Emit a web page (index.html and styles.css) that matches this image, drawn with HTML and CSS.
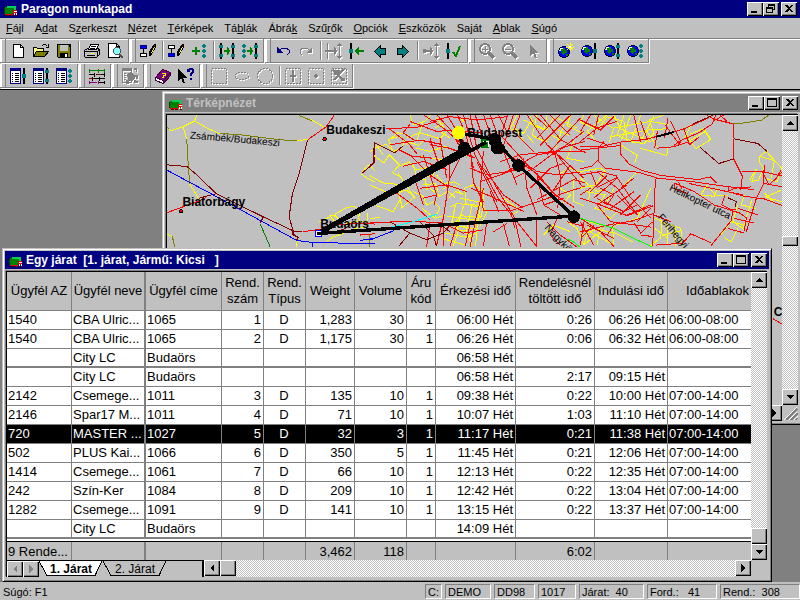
FILE: index.html
```
<!DOCTYPE html>
<html lang="hu">

<head>
    <meta charset="UTF-8">
    <meta name="viewport" content="width=device-width, initial-scale=1.0">
    <title>Paragon munkapad</title>
    <link rel="stylesheet" href="styles.css">
</head>

<body>
    <!-- shared icon shapes -->
    <svg class="defs" aria-hidden="true">
        <symbol id="truck" viewBox="0 0 14 12">
            <path d="M1 2h9v7H1z" fill="#008000"/><path d="M3 1h9v2H3zM10 3h2v3h-2z" fill="#00d050"/>
            <path d="M0 3h1v6H0z" fill="#004000"/>
            <path d="M9 5h4v4H9zM1 9h8v1H1z" fill="#e00000"/><path d="M10 6h3v1h-3zM10 8h1v2h-1zM12 8h1v2h-1z" fill="#fff"/>
            <path d="M2 10h3v1H2zM6 10h3v1H6zM11 10h2v1h-2z" fill="#600000"/>
        </symbol>
        <symbol id="new" viewBox="0 0 18 18">
            <path d="M4.500 2.500h7l3 3v10h-10z" fill="#fff" stroke="#000"/><path d="M11.500 2.500v3h3" fill="none" stroke="#000"/>
        </symbol>
        <symbol id="open" viewBox="0 0 18 18">
            <path d="M1.500 14.500v-9h3l1 1h6v3" fill="#ff8" stroke="#000"/><path d="M1.500 14.500l3-5h12l-4 5z" fill="#808000" stroke="#000"/>
            <path d="M9.500 4.500l2-2h2l2 2M16.500 2v3h-3" fill="none" stroke="#000"/>
        </symbol>
        <symbol id="save" viewBox="0 0 18 18">
            <path d="M2.500 2.500h13v13h-12l-1-1z" fill="#808000" stroke="#000"/><path d="M5 3h8v6H5z" fill="#c0c0c0"/>
            <path d="M5 11h8v5H5zM14 3h1v2h-1z"/><path d="M10 12h2v3h-2z" fill="#fff"/>
        </symbol>
        <symbol id="print" viewBox="0 0 18 18">
            <path d="M1.500 8.500l3-2h11l1 2v4l-3 3h-11l-1-1z" fill="#c0c0c0" stroke="#000"/>
            <path d="M5.500 7.500l2-5h8l-2 5z" fill="#fff" stroke="#000"/><path d="M8 4.500h5M7 6.500h5M2 9.500h12l2-1M4 13.500h8M14.500 9v5" stroke="#000" fill="none"/>
            <path d="M8 11h3v1H8z" fill="#ff0"/>
        </symbol>
        <symbol id="preview" viewBox="0 0 18 18">
            <path d="M2.500 1.500h8l3 3v11h-11z" fill="#fff" stroke="#000"/><path d="M10.500 1.500v3h3" fill="none" stroke="#000"/>
            <circle cx="11" cy="9" r="3.500" fill="#8ff" stroke="#505050"/><path d="M13 12l4 4" stroke="#505050" stroke-width="2"/>
        </symbol>
        <symbol id="pencil" viewBox="0 0 18 18">
            <path d="M10 14v-4l4-7 1-1h2v3l-4 7-1 1-1 1z"/><path d="M12 10h1V8h1V6h1V5h1v1h-1v2h-1v2h-1v1h-1z" fill="#ff0"/>
            <path d="M15 3h1v1h-1z" fill="#800000"/>
        </symbol>
        <symbol id="edit-depot" viewBox="0 0 18 18">
            <path d="M1.500 3.500h6v3h-6z" fill="#00f" stroke="#000080"/><path d="M4.500 7v5" stroke="#000" fill="none"/>
            <path d="M1.500 11.500h6v3h-6z" fill="#fff" stroke="#000"/><use href="#pencil"/>
        </symbol>
        <symbol id="edit-order" viewBox="0 0 18 18">
            <path d="M1.500 3.500h6v3h-6z" fill="#fff" stroke="#000"/><path d="M4.500 7v5" stroke="#000" fill="none"/>
            <path d="M1.500 11.500h6v3h-6z" fill="#00f" stroke="#000080"/><use href="#pencil"/>
        </symbol>
        <symbol id="dots" viewBox="0 0 4 14">
            <path d="M1 0h2v1h1v2H3v1H1V3H0V1h1zM1 5h2v1h1v2H3v1H1V8H0V6h1zM1 10h2v1h1v2H3v1H1v-1H0v-2h1z" fill="#008080"/>
        </symbol>
        <symbol id="stopline" viewBox="0 0 4 16">
            <path d="M1 0h2v16H1z"/><path d="M0 2h4v3H0zM0 11h4v3H0z" fill="#008080"/>
        </symbol>
        <symbol id="midline" viewBox="0 0 4 16">
            <path d="M1 0h2v16H1z"/><path d="M0 6h4v4H0z" fill="#008080"/>
        </symbol>
        <symbol id="add" viewBox="0 0 18 18">
            <path d="M5 5h2v3h3v2H7v3H5v-3H2V8h3z" fill="#008000"/><use href="#dots" x="12" y="2" width="4" height="14"/>
        </symbol>
        <symbol id="garrow" viewBox="0 0 6 8">
            <path d="M0 3h3V0h1v1h1v2h1v2H5v2H4v1H3V5H0z" fill="#008000"/>
        </symbol>
        <symbol id="route-one" viewBox="0 0 18 18">
            <use href="#stopline" x="1" y="1" width="4" height="16"/><use href="#garrow" x="6" y="5" width="6" height="8"/><use href="#stopline" x="13" y="1" width="4" height="16"/>
        </symbol>
        <symbol id="route-all" viewBox="0 0 18 18">
            <use href="#dots" x="1" y="2" width="4" height="14"/><use href="#garrow" x="6" y="5" width="6" height="8"/><use href="#stopline" x="13" y="1" width="4" height="16"/>
        </symbol>
        <symbol id="undo" viewBox="0 0 18 18">
            <path d="M5 9l3-3h4l3 2v3l-2 2" fill="none" stroke="#000080" stroke-width="1"/><path d="M3 5v6h6z" fill="#000080"/>
        </symbol>
        <symbol id="redo" viewBox="0 0 18 18">
            <path d="M13 9l-3-3H6L3 8v3l2 2" fill="none" stroke="#808080" stroke-width="1"/><path d="M15 5v6H9z" fill="#808080"/>
        </symbol>
        <symbol id="insert" viewBox="0 0 18 18">
            <path d="M2 1h1v16H2zM0 8h6v2H0zM6 8h3V5h1v1h1v2h1v2h-1v2h-1v1H9v-3H6zM14 1h1v16h-1zM12 3h5v1h-5zM13 2h3v1h-3zM12 14h5v1h-5zM13 15h3v1h-3z" fill="#808080"/>
        </symbol>
        <symbol id="remove" viewBox="0 0 18 18">
            <use href="#midline" x="1" y="1" width="4" height="16"/><path d="M7 8h1V7h1V6h1V5h1v3h5v2h-5v3h-1v-1H9v-1H8v-1H7z" fill="#008000"/>
        </symbol>
        <symbol id="prev" viewBox="0 0 18 18">
            <path d="M3.500 9.500l6-6v3h5v6h-5v3z" fill="#008080" stroke="#000"/>
        </symbol>
        <symbol id="next" viewBox="0 0 18 18">
            <path d="M14.500 9.500l-6-6v3h-5v6h5v3z" fill="#008080" stroke="#000"/>
        </symbol>
        <symbol id="assign" viewBox="0 0 18 18">
            <path d="M1 7h3v1h4V5h1v1h1v2h1v2h-1v2H9v1H8v-3H4v1H1zM14 1h1v16h-1zM12 3h5v1h-5zM13 2h3v1h-3zM12 14h5v1h-5zM13 15h3v1h-3z" fill="#808080"/>
        </symbol>
        <symbol id="accept" viewBox="0 0 18 18">
            <use href="#midline" x="1" y="1" width="4" height="16"/><path d="M8 10l3 4 4-10" fill="none" stroke="#008000" stroke-width="2"/>
        </symbol>
        <symbol id="zoom-in" viewBox="0 0 18 18">
            <circle cx="7" cy="7" r="5" fill="none" stroke="#808080" stroke-width="2"/><path d="M4 7h6M7 4v6" stroke="#808080"/><path d="M11 11l5 5" stroke="#808080" stroke-width="3"/>
        </symbol>
        <symbol id="zoom-out" viewBox="0 0 18 18">
            <circle cx="7" cy="7" r="5" fill="none" stroke="#808080" stroke-width="2"/><path d="M4 7h6" stroke="#808080"/><path d="M11 11l5 5" stroke="#808080" stroke-width="3"/>
        </symbol>
        <symbol id="pointer" viewBox="0 0 18 18">
            <path d="M6 3v11l3-3 2 5h2l-2-5h3z" fill="#808080"/>
        </symbol>
        <symbol id="globe" viewBox="0 0 12 12">
            <circle cx="6" cy="6" r="5.500" fill="#00f" stroke="#000040"/><path d="M3 2h4v2h2v3H7l-2 2-2-2 1-2-2-1zM8 8h2v2H8z" fill="#008000"/>
            <path d="M2 2h3v1H3v2H1V4h1z" fill="#fff"/>
        </symbol>
        <symbol id="globe-new" viewBox="0 0 18 18">
            <use href="#globe" x="1" y="4" width="12" height="12"/><path d="M13 1v8M9 5h8M10 2l6 6M16 2l-6 6" stroke="#ff0"/><path d="M12 4h2v2h-2z" fill="#fff"/>
        </symbol>
        <symbol id="globe-mid" viewBox="0 0 18 18">
            <use href="#globe" x="1" y="3" width="12" height="12"/><use href="#midline" x="13" y="1" width="4" height="16"/>
        </symbol>
        <symbol id="globe-stop" viewBox="0 0 18 18">
            <use href="#globe" x="1" y="3" width="12" height="12"/><use href="#stopline" x="13" y="1" width="4" height="16"/>
        </symbol>
        <symbol id="globe-dots" viewBox="0 0 18 18">
            <use href="#globe" x="1" y="3" width="12" height="12"/><use href="#dots" x="13" y="2" width="4" height="14"/>
        </symbol>
        <symbol id="sheet" viewBox="0 0 11 16">
            <path d="M.5.5h10v15H.5z" fill="#fff" stroke="#000080"/><path d="M1 1h9v2H1z" fill="#000080"/>
            <path d="M2 5.500h1M5 5.500h4M2 7.500h1M5 7.500h4M2 9.500h1M5 9.500h4M2 11.500h1M5 11.500h4M2 13.500h1M5 13.500h4" stroke="#000"/>
        </symbol>
        <symbol id="sheet-mid" viewBox="0 0 18 18">
            <use href="#sheet" x="1" y="1" width="11" height="16"/><use href="#midline" x="13" y="1" width="4" height="16"/>
        </symbol>
        <symbol id="sheet-stop" viewBox="0 0 18 18">
            <use href="#sheet" x="1" y="1" width="11" height="16"/><use href="#stopline" x="13" y="1" width="4" height="16"/>
        </symbol>
        <symbol id="sheet-dots" viewBox="0 0 18 18">
            <use href="#sheet" x="1" y="1" width="11" height="16"/><use href="#dots" x="13" y="2" width="4" height="14"/>
        </symbol>
        <symbol id="gantt" viewBox="0 0 18 18">
            <path d="M1 3.500h16M1.500 2v4M10.500 2v4M16.500 2v4" stroke="#008000"/>
            <path d="M1 7.500h5M8 7.500h9M6.500 6v4M16.500 6v4M1 11.500h16M4.500 10v4M11.500 10v4" stroke="#000"/>
            <path d="M1 11.500h5M9 7.500h4" stroke="#800000"/><path d="M1 15.500h8M1.500 14v3M10.500 14v3" stroke="#800080"/><path d="M11 15.500h6M16.500 14v3" stroke="#000"/>
        </symbol>
        <symbol id="report" viewBox="0 0 18 18">
            <path d="M1.500 1.500h9v14h-9z" fill="none" stroke="#808080"/><path d="M2 2h8v2H2zM3 6h2v1H3zM3 8h2v1H3zM3 10h2v1H3zM3 12h2v1H3z" fill="#808080"/>
            <path d="M6 7l4-2 4 3v3l-3 3H8v3H5v-4h2zM13 1h3v4h-1V3h-2zM13 8h4v4h-2v2h2v2h-4v-3h2v-3h-2z" fill="#808080"/>
        </symbol>
        <symbol id="book" viewBox="0 0 18 18">
            <path d="M1.500 10.500l7-8 8 3-7 8z" fill="#800080" stroke="#400040"/><path d="M1.500 10.500v3l8 3v-3z" fill="#fff" stroke="#400040"/>
            <path d="M9.500 13.500v3l7-8v-3z" fill="#800080" stroke="#400040"/><path d="M8 6h3v2H9v2H8" fill="none" stroke="#ff0"/>
        </symbol>
        <symbol id="help" viewBox="0 0 18 18">
            <path d="M1 2v12l3-3 2 5h2l-2-5h4z"/><path d="M10 2h2V1h4v1h1v4h-1v1h-1v2h-2V6h1V5h1V3h-2v2h-3zM13 11h2v2h-2z" fill="#000080"/>
        </symbol>
        <symbol id="sel-rect" viewBox="0 0 18 18">
            <path d="M1.500 1.500h15v15h-15z" class="dash"/>
        </symbol>
        <symbol id="sel-oval" viewBox="0 0 18 18">
            <ellipse cx="9" cy="9" rx="7" ry="3.500" class="dash"/>
        </symbol>
        <symbol id="sel-circle" viewBox="0 0 18 18">
            <circle cx="9" cy="9" r="7.500" class="dash"/>
        </symbol>
        <symbol id="sel-line" viewBox="0 0 18 18">
            <path d="M1.500 1.500h15v15h-15z" class="dash"/><path d="M8 3h2v12H8zM6 8h6v2H6z" fill="#808080"/>
        </symbol>
        <symbol id="sel-dot" viewBox="0 0 18 18">
            <path d="M1.500 1.500h15v15h-15z" class="dash"/><path d="M7 8h1V7h2v1h1v2h-1v1H8v-1H7z" fill="#808080"/>
        </symbol>
        <symbol id="sel-cut" viewBox="0 0 18 18">
            <path d="M1.500 1.500h15v15h-15z" class="dash"/><path d="M3 3l10 10M14 2L4 13" stroke="#808080" stroke-width="2"/><path d="M4 3h6v5H4zM11 11h4v3h-4z" fill="#808080"/>
        </symbol>
    </svg>

    <header class="titlebar app-title">
        <svg class="truck"><use href="#truck"/></svg>
        <h1 class="caption">Paragon munkapad</h1>
        <div class="winbuttons">
            <button class="winbtn" aria-label="Kis méret"><svg viewBox="0 0 12 10"><path d="M2 7h6v2H2z"/></svg></button>
            <button class="winbtn" aria-label="Előző méret"><svg viewBox="0 0 12 10"><path d="M3 0h7v6H8V5h1V2H4v1H3zM1 3h7v6H1zM2 5v3h5V5z" fill-rule="evenodd"/></svg></button>
            <button class="winbtn close" aria-label="Bezárás"><svg viewBox="0 0 12 10"><path d="M2 1h2l2 2 2-2h2L7 4.500 10 8H8L6 6 4 8H2l3-3.500z"/></svg></button>
        </div>
    </header>

    <nav class="menu">
        <a href="#"><u>F</u>ájl</a>
        <a href="#">A<u>d</u>at</a>
        <a href="#">S<u>z</u>erkeszt</a>
        <a href="#"><u>N</u>ézet</a>
        <a href="#"><u>T</u>érképek</a>
        <a href="#">Tá<u>b</u>lák</a>
        <a href="#">Ábrá<u>k</u></a>
        <a href="#">Szű<u>r</u>ők</a>
        <a href="#"><u>O</u>pciók</a>
        <a href="#"><u>E</u>szközök</a>
        <a href="#">Sa<u>j</u>át</a>
        <a href="#"><u>A</u>blak</a>
        <a href="#"><u>S</u>úgó</a>
    </nav>

    <div class="toolrow first">
        <div class="tools">
            <button class="tool" aria-label="Új"><svg><use href="#new"/></svg></button>
            <button class="tool" aria-label="Megnyitás"><svg><use href="#open"/></svg></button>
            <button class="tool" aria-label="Mentés"><svg><use href="#save"/></svg></button>
            <span class="sep"></span>
            <button class="tool" aria-label="Nyomtatás"><svg><use href="#print"/></svg></button>
            <button class="tool" aria-label="Nyomtatási kép"><svg><use href="#preview"/></svg></button>
        </div>
        <div class="tools">
            <button class="tool" aria-label="Raktár szerkesztése"><svg><use href="#edit-depot"/></svg></button>
            <span class="sep"></span>
            <button class="tool" aria-label="Rendelés szerkesztése"><svg><use href="#edit-order"/></svg></button>
            <button class="tool" aria-label="Hozzáadás"><svg><use href="#add"/></svg></button>
            <span class="sep"></span>
            <button class="tool" aria-label="Járat tervezése"><svg><use href="#route-one"/></svg></button>
            <button class="tool" aria-label="Minden járat tervezése"><svg><use href="#route-all"/></svg></button>
        </div>
        <div class="tools">
            <button class="tool" aria-label="Visszavonás"><svg><use href="#undo"/></svg></button>
            <button class="tool" aria-label="Mégis" disabled><svg><use href="#redo"/></svg></button>
            <span class="sep"></span>
            <button class="tool" aria-label="Beszúrás" disabled><svg><use href="#insert"/></svg></button>
            <button class="tool" aria-label="Kivétel"><svg><use href="#remove"/></svg></button>
            <button class="tool" aria-label="Előző"><svg><use href="#prev"/></svg></button>
            <button class="tool" aria-label="Következő"><svg><use href="#next"/></svg></button>
            <span class="sep"></span>
            <button class="tool" aria-label="Hozzárendelés" disabled><svg><use href="#assign"/></svg></button>
            <button class="tool" aria-label="Elfogadás"><svg><use href="#accept"/></svg></button>
        </div>
        <div class="tools">
            <button class="tool" aria-label="Nagyítás" disabled><svg><use href="#zoom-in"/></svg></button>
            <button class="tool" aria-label="Kicsinyítés" disabled><svg><use href="#zoom-out"/></svg></button>
            <button class="tool" aria-label="Kijelölés" disabled><svg><use href="#pointer"/></svg></button>
        </div>
        <div class="tools">
            <button class="tool" aria-label="Új térkép"><svg><use href="#globe-new"/></svg></button>
            <button class="tool" aria-label="Járat térképen"><svg><use href="#globe-mid"/></svg></button>
            <button class="tool" aria-label="Megállók térképen"><svg><use href="#globe-stop"/></svg></button>
            <button class="tool" aria-label="Rendelések térképen"><svg><use href="#globe-dots"/></svg></button>
        </div>
    </div>
    <div class="toolrow">
        <div class="tools">
            <button class="tool" aria-label="Járat tábla"><svg><use href="#sheet-mid"/></svg></button>
            <button class="tool" aria-label="Megálló tábla"><svg><use href="#sheet-stop"/></svg></button>
            <button class="tool" aria-label="Rendelés tábla"><svg><use href="#sheet-dots"/></svg></button>
        </div>
        <div class="tools">
            <button class="tool" aria-label="Időábra"><svg><use href="#gantt"/></svg></button>
        </div>
        <div class="tools">
            <button class="tool" aria-label="Szűrő" disabled><svg><use href="#report"/></svg></button>
        </div>
        <div class="tools">
            <button class="tool" aria-label="Kézikönyv"><svg><use href="#book"/></svg></button>
            <button class="tool" aria-label="Súgó"><svg><use href="#help"/></svg></button>
        </div>
        <div class="tools">
            <button class="tool" aria-label="Téglalap" disabled><svg><use href="#sel-rect"/></svg></button>
            <button class="tool" aria-label="Ellipszis" disabled><svg><use href="#sel-oval"/></svg></button>
            <button class="tool" aria-label="Kör" disabled><svg><use href="#sel-circle"/></svg></button>
            <span class="sep"></span>
            <button class="tool" aria-label="Járatok kijelölése" disabled><svg><use href="#sel-line"/></svg></button>
            <button class="tool" aria-label="Pontok kijelölése" disabled><svg><use href="#sel-dot"/></svg></button>
            <button class="tool" aria-label="Kijelölés törlése" disabled><svg><use href="#sel-cut"/></svg></button>
        </div>
    </div>

    <main class="desktop">
        <!-- map window -->
        <section class="window map-window">
            <div class="titlebar inactive">
                <svg class="truck"><use href="#truck"/></svg>
                <h2 class="caption">Térképnézet</h2>
                <div class="winbuttons">
                    <button class="winbtn" aria-label="Kis méret"><svg viewBox="0 0 12 10"><path d="M2 7h6v2H2z"/></svg></button>
                    <button class="winbtn" aria-label="Teljes méret"><svg viewBox="0 0 12 10"><path d="M1 0h10v9H1zM2 2v6h8V2z" fill-rule="evenodd"/></svg></button>
                    <button class="winbtn close" aria-label="Bezárás"><svg viewBox="0 0 12 10"><path d="M2 1h2l2 2 2-2h2L7 4.500 10 8H8L6 6 4 8H2l3-3.500z"/></svg></button>
                </div>
            </div>
            <div class="frame map-frame">
                <!-- three map units to one pixel -->
                <svg class="map" viewBox="0 0 1842 867" preserveAspectRatio="xMinYMin slice">
                    <!-- west sheet -->
                    <g transform="translate(-24 -81)">
                        <path class="yellow" d="M24 118l12 10 36-12 34-17 8-20M106 99l40 22 36 16M72 116l6 20 5 18M92 288l16 25 12 22M412 158l34-4M455 95l42 24M606 255l14-20 10-5 15 18M606 258l20 14 19 8M24 438l16 6M510 382l16-2 14 14-10 10zM520 380l22 15M526 378l30-18 24-6 26 10-10 22 6 18M622 374v40M500 460l20-14 80-30 45 6M480 400l30-14M560 404l50-6M413 457l-2 19"/>
                        <path class="olive" d="M83 154l5 85 4 48M182 136l60 4 120 15 50 3M418 82l38 16M40 444l7 32M24 118l6 4M628 440v36"/>
                        <path class="maroon" d="M24 230l60 5 30 26 57 55 60 30 82 40 90 42 25 2M171 316l-52 14M444 156l-25 100-20 60-10 70 12 40 2 12 14 10-8 10M312 386l-10 18M400 424l-2 14 20 10M644 162v62l-38 32M500 438l60-18"/>
                        <path class="red" d="M524 82l-24 34-54 38M24 373l96-35 20-10M430 430l50-7 40-12 60-6 65 2M570 406v8M600 440l45-4"/>
                        <path class="blue" d="M24 246l146 78 242 132 45 6 188 4M460 462l-2 14M600 456l45-6"/>
                        <path class="green" d="M302 406l30 68"/>
                    </g>
                    <!-- city sheet -->
                    <g transform="translate(606 -81)">
                        <path class="yellow" d="M0 192l20-14 30-10 20 22 24-8 12-24 40 14 20-20M10 200l32 24 16-24 30 30-20 24 30 14M70 190l-14-36 36-10 20 26M0 262l40 22 60 6 30-14M0 290l60 26 50-10 24 20-40 34M20 352l50 18 20-34M88 235l30-14 20 24 30-6-10 26-28 10M120 80l10 30 34-10 18-18M110 150l40-16 60 18 20-22-30-40M140 180l40 10 50-16M150 205l60 8 30 18M0 392l30-6M130 310l30 14 10 26 22-10 18 20-16 28M180 300l30 24 24-16 22 20M156 360l40 30 30-10M200 260l20 26 30-4M210 130l30 20M260 80l22 20M284 300l26-10 30 16v36l-22 14-30-10z"/>
                        <path class="yellow" d="M240 356l20-10 80 6-8 36-60-6-22 28 60 10 20-40M256 350l-10 50 20 26-16 46M280 354l-20 70 30 4 16 46M306 352l-18 80 20 20M330 350l-14 124M226 434l60 12 34-12M216 450l70 20M240 410l80 12M232 384l90 12M270 330l60 12 20 30-20 40M440 82l-20 40 40 14 18-30 44 20M460 96l70 30 20-40M500 82l-14 60 40 20 30-40 40 20M560 90l60 30M540 140l80 40M580 110l-24 70M600 82l-10 30 50 26M610 160l-20 50 50 10M560 260l40-20 30 14M610 270v70l30 12M570 300l30 20-30 34M520 440l30-30 50 20M400 330l40 30M420 380l24-10M590 400l30 20 20 50"/>
                        <path class="yellow" d="M130 230l12 40 24 4 6 30M150 270l40-10 14-30M160 290l36-4 10 26M110 290l26 44M60 154l24-20 30 6M40 200l-20-30M84 254l20 30-16 36 10 40M220 300l34-6 18 20M250 280l20 10M236 330l20-20 24 8M196 120l26-16M160 100l-20 60M480 84l10 24M530 84l-10 40M430 110l30 50M470 140l20 24"/>
                        <path class="red" d="M160 80l60 40 70 60M200 80l46 50 20 40M232 82l30 50 40 60 8 90 30 60M262 80l26 60 22 100M280 80l34 120 70 130 40 50 10 40M300 80l20 100 60 120 60 100 60 75M315 80l20 60 40 36M340 80l20 56 50 60 90 60 60 70M360 80l40 110 40 100M385 80l30 60M412 82l-20 60 60 66 100 110 60 40M430 80l-36 110M450 80l-20 50 60 60M470 80l60 90 110 100M490 80l40 36M510 80l60 74 75 40M540 82l60 60M570 80l-70 70M600 82l-90 90M630 90l-100 110M640 130l-90 70M180 100l60-14 80 10 90-10M120 100l80 30 60-4 80 10M50 122l90-4 60-18M58 122l60 46 24 30M60 170l90-14 60 12M86 184l40 20 60 6M100 234l60-14 70 24M120 200l60 60 54 36M160 200l20 60 20 60-8 30M180 170l60 10 70 26"/>
                        <path class="red" d="M240 200v60l-20 130-20 80M270 210l-30 60M300 240l50 20 90-14M330 280l60-20 80-30M302 300l50 20 110 50M340 300l-20 80-20 94M340 366l80 2 130-44 94-30M340 190l-10 120 10 56M360 310l26 60M370 430l40-24M400 408l18 66M500 390v85M432 385l20 90M390 220l60-20 100-10 95 0M410 250l90-50 60-10M430 270l60-30 80-60 74-20M440 210l60 40 60 10 80-10M480 300l60-60 40-14M500 334l110-60 35 10M520 350l60-20M552 190l20 80-10 90M560 200l80 100M600 230l-60 90M460 210l10 90 30 80M500 260l20 90 50 30M0 404l120-6 100 6M80 314l60 44 40 36M150 300l80-10 60 20M130 260l30 90M160 330l40-10M220 410v64M260 410l-20 64M300 406l-14 68M350 400l-10 74M180 405l-10 70M220 404l60 30 60-10M10 420l60 4"/>
                        <path class="red" d="M530 400l40 40 50 36M560 390l-20 50 30 30M590 400l50 14M120 110l-20 24 36 24M180 150l30 90M210 150l20 120M235 180l80 30M340 240l60 80 60 40M320 220l60 120"/>
                        <path class="maroon" d="M0 230l10-4 4-62 60 30 26-20M60 400l60 34 50 20 50-20 20-24M120 434l-32 38M150 400l40 40 10 34M200 400l40 30"/>
                        <path class="cyan" d="M0 426l60-8 70-18 70-22"/>
                        <path class="blue" d="M0 455l72-28"/>
                        <path class="lime" d="M590 452l16 6 22 18M620 388l25 8"/>
                    </g>
                    <!-- east sheet -->
                    <g transform="translate(1236 -81)">
                        <path class="yellow" d="M10 82l-10 20 50 24 30-40 50 14 10 60 50 6 30-30-14-40 40-14M40 82l60 40-14 40M80 80l-60 50 28 30M100 82l20 40 90 40M130 82l-20 60 50 20M150 82l-26 70M180 82l-30 80M220 84l-40 76M100 120l110-20 54 10M90 146l110-20 60-4M120 170l50 32-8 22M178 180l80 22 4-22M196 126l34 50M310 126l34 56 44-26-20-34-40 16M324 160l50-30M330 112l-20 40M370 124l20 30M0 250l60-10 14 10-30 40-44 10M0 270l50 40 30-10M14 310l60 10-30 40 30 10M70 360l40 10-20 20-16-10M30 300l-6 40M120 300l44-44 14-4M100 300l-20 40M210 300l-40 90-60 20M560 188l-22 14-4 18 14 20-16 36-20 4 14-38-20 34M556 190l46 50-14 40-30-8M535 204l45 14-10 50M0 390l60 20-10 60M10 420l90 50M0 440l50-18 50 12v40M10 470l60-50M100 400l-4 30 60 30M30 400l-20 70M218 388l26 10-4 50-30 24M240 400l60 20 4 50M245 440l60-14M260 404v66M285 412v60M222 420l40 30M378 292l-18 28 40 4 10-24M378 292l30 30 32 0M600 306l-46 20 52 16M490 320l-10 30 44 10M470 350l-14 50 34 24M512 336l-26 84M420 440l30-40 40 10M430 448l20 12 20-40M550 314l30 30"/>
                        <path class="red" d="M0 96l60 30 40-40M0 130l30-48M40 140l14-58M0 160l50-40 60-20M20 150l60 20M0 174l60 2 60-14 76-8 50-14 60-16 76-34M0 186l120-14M70 160l-16 20v40l20 20 98 12 60 18 100 10 98 14 50 6 38 4M120 164v34l26 30 36 18 60 16 110 12 36-8 18 18M54 214l-20 20-34 8M404 82l-10 26-40 26-60 26-14 12M378 82l24 12 56 14v42M416 80l22 20M430 80l-30 18M458 152v60l26 52M270 100l30 60-10 14M262 90l-10 60M254 112l44 60M230 130l-8 50M180 100l20 54M160 82l20 80M230 180l50-4 40-14M310 124l16 46 30-24M484 264l-4 40M484 250h60l60 14M550 230l-4 60-20 40-30 100M544 250l20 40 46-46M600 245l-20 34M550 286l55 10M440 310l50 14 60 8 54 20M440 310l20-10 50-4M432 320l-10 30 30 14 14 0M442 296v14M456 368l-6 30-60 74M230 270l-6 4-8 200M280 284l60 26 60 40 76 24 20 14-6 40M280 284l2 18 40 14M294 282l10 20M326 286l160 34M330 436l62 28M330 436l-24 28-80 6"/>
                        <path class="red" d="M0 260l60-10 50 14M30 248l20 50 60-30 40 60 60 60M50 250l60 50 60 80M60 300l40 20-20 30-30-20M30 310l50-48M40 330l70-60M50 350l90-60M90 360l70-50M120 380l60-60M70 340l60 30 40-20M120 300l40-30M140 380l70-30M110 320l60 60M50 350l40 50 120 16M0 330l50 16 90 36 78-30M150 400l66-24M0 390l60 40 40 44M0 400l40 70M10 400l-10 70M20 410l80 40M0 430l100-24M160 404l20 30 36-34M0 450l40-40M180 440l34 4M80 440l20-30M100 408l60-12M220 380l50 20M210 360l-40 40M470 360l60 20M460 390l60 14M440 420l50 14M0 320l30-20"/>
                        <path class="maroon" d="M336 108l60-26M358 178l56 48 44-14M458 152l72 14 28 24M440 328l26 12-4 16"/>
                        <path class="olive" d="M456 108l40-4 46-8 20-14"/>
                        <path class="black" d="M226 146l54-14"/>
                        <path class="lime" d="M0 390l100 30 60 30 54 25"/>
                        <!-- strip beside the front window -->
                        <path class="red" d="M576 690l30 18"/>
                    </g>
                    <g class="places">
                        <text x="476" y="57">Budakeszi</text>
                        <text x="46" y="273">Biatorbágy</text>
                        <text x="458" y="339">Budaörs</text>
                        <text x="898" y="67">Budapest</text>
                        <text x="1814" y="600">Cs</text>
                    </g>
                    <g class="streets">
                        <text transform="translate(68 70) rotate(5)">Zsámbék/Budakeszi</text>
                        <text transform="translate(1500 224) rotate(26)">Helikopter utca</text>
                        <text transform="translate(1466 306) rotate(50)">Ferihegyi út</text>
                        <text transform="translate(1128 338) rotate(47)">Nagykőrösi</text>
                    </g>
                    <circle class="town" cx="471" cy="72" r="5"/>
                    <circle class="town" cx="42" cy="288" r="5"/>
                    <!-- the planned route -->
                    <path d="M940 66h24v32h-24z" fill="#008000"/><path class="flag" d="M946 80h16v16"/>
                    <g class="route">
                        <path d="M453 354L890 102" stroke-width="15"/>
                        <path d="M453 354L950 84" stroke-width="11"/>
                        <path d="M872 54l14 44M872 54l104 18 74 78 166 152L453 354" stroke-width="10"/>
                    </g>
                    <path d="M443 344h20v20h-20z" fill="#fff" stroke="#00f" stroke-width="3"/><path d="M448 350h14v10h-12z"/>
                    <circle cx="889" cy="99" r="19"/>
                    <path d="M966 56h22l12 12v14l10 12v14l-12 10h-16l-12-12V94l-8-12z"/>
                    <circle cx="1051" cy="151" r="19"/><circle cx="1216" cy="304" r="19"/>
                    <circle cx="872" cy="53" r="20" fill="#ff0"/>
                </svg>
                <div class="scroll vertical">
                    <button class="arrow" aria-label="Fel"><svg viewBox="0 0 8 8"><path d="M4 2l4 4H0z"/></svg></button>
                    <span class="track map-above"></span>
                    <span class="thumb map-thumb"></span>
                    <span class="track grow"></span>
                    <button class="arrow" aria-label="Le"><svg viewBox="0 0 8 8"><path d="M0 2h8L4 6z"/></svg></button>
                </div>
                <div class="scroll">
                    <button class="arrow" aria-label="Balra"><svg viewBox="0 0 8 8"><path d="M6 0v8L2 4z"/></svg></button>
                    <span class="track grow"></span>
                    <button class="arrow" aria-label="Jobbra"><svg viewBox="0 0 8 8"><path d="M2 0v8l4-4z"/></svg></button>
                </div>
                <svg class="grip" viewBox="0 0 16 16"><path d="M2 16L16 2M7 16l9-9M12 16l4-4" stroke="#fff"/><path d="M4 16L16 4M9 16l7-7M14 16l2-2" stroke="#808080" stroke-width="2"/></svg>
            </div>
        </section>

        <!-- trip window -->
        <section class="window trip-window">
            <div class="titlebar">
                <svg class="truck"><use href="#truck"/></svg>
                <h2 class="caption">Egy járat  [1. járat, Jármű: Kicsi   ]</h2>
                <div class="winbuttons">
                    <button class="winbtn" aria-label="Kis méret"><svg viewBox="0 0 12 10"><path d="M2 7h6v2H2z"/></svg></button>
                    <button class="winbtn" aria-label="Teljes méret"><svg viewBox="0 0 12 10"><path d="M1 0h10v9H1zM2 2v6h8V2z" fill-rule="evenodd"/></svg></button>
                    <button class="winbtn close" aria-label="Bezárás"><svg viewBox="0 0 12 10"><path d="M2 1h2l2 2 2-2h2L7 4.500 10 8H8L6 6 4 8H2l3-3.500z"/></svg></button>
                </div>
            </div>
            <div class="frame trip-frame">
                <table class="trip">
                    <colgroup>
                        <col class="c-id"><col class="c-name"><col class="c-addr"><col class="c-num"><col class="c-num"><col class="c-weight">
                        <col class="c-volume"><col class="c-code"><col class="c-arrive"><col class="c-spent"><col class="c-leave"><col>
                    </colgroup>
                    <thead>
                        <tr>
                            <th>Ügyfél AZ</th><th>Ügyfél neve</th><th>Ügyfél címe</th><th>Rend.<br>szám</th><th>Rend.<br>Típus</th><th>Weight</th>
                            <th>Volume</th><th>Áru<br>kód</th><th>Érkezési idő</th><th>Rendelésnél<br>töltött idő</th><th>Indulási idő</th><th class="last">Időablakok</th>
                        </tr>
                    </thead>
                    <tbody>
                        <tr><td>1540</td><td>CBA Ulric...</td><td>1065</td><td>1</td><td>D</td><td>1,283</td><td>30</td><td>1</td><td>06:00 Hét</td><td>0:26</td><td>06:26 Hét</td><td>06:00-08:00</td></tr>
                        <tr><td>1540</td><td>CBA Ulric...</td><td>1065</td><td>2</td><td>D</td><td>1,175</td><td>30</td><td>1</td><td>06:26 Hét</td><td>0:06</td><td>06:32 Hét</td><td>06:00-08:00</td></tr>
                        <tr class="break"><td></td><td>City LC</td><td>Budaörs</td><td></td><td></td><td></td><td></td><td></td><td>06:58 Hét</td><td></td><td></td><td></td></tr>
                        <tr><td></td><td>City LC</td><td>Budaörs</td><td></td><td></td><td></td><td></td><td></td><td>06:58 Hét</td><td>2:17</td><td>09:15 Hét</td><td></td></tr>
                        <tr><td>2142</td><td>Csemege...</td><td>1011</td><td>3</td><td>D</td><td>135</td><td>10</td><td>1</td><td>09:38 Hét</td><td>0:22</td><td>10:00 Hét</td><td>07:00-14:00</td></tr>
                        <tr><td>2146</td><td>Spar17 M...</td><td>1011</td><td>4</td><td>D</td><td>71</td><td>10</td><td>1</td><td>10:07 Hét</td><td>1:03</td><td>11:10 Hét</td><td>07:00-14:00</td></tr>
                        <tr class="selected"><td>720</td><td>MASTER ...</td><td>1027</td><td>5</td><td>D</td><td>32</td><td>3</td><td>1</td><td>11:17 Hét</td><td>0:21</td><td>11:38 Hét</td><td>07:00-14:00</td></tr>
                        <tr><td>502</td><td>PLUS Kai...</td><td>1066</td><td>6</td><td>D</td><td>350</td><td>5</td><td>1</td><td>11:45 Hét</td><td>0:21</td><td>12:06 Hét</td><td>07:00-14:00</td></tr>
                        <tr><td>1414</td><td>Csemege...</td><td>1061</td><td>7</td><td>D</td><td>66</td><td>10</td><td>1</td><td>12:13 Hét</td><td>0:22</td><td>12:35 Hét</td><td>07:00-14:00</td></tr>
                        <tr><td>242</td><td>Szín-Ker</td><td>1084</td><td>8</td><td>D</td><td>209</td><td>10</td><td>1</td><td>12:42 Hét</td><td>0:22</td><td>13:04 Hét</td><td>07:00-14:00</td></tr>
                        <tr><td>1282</td><td>Csemege...</td><td>1091</td><td>9</td><td>D</td><td>141</td><td>10</td><td>1</td><td>13:15 Hét</td><td>0:22</td><td>13:37 Hét</td><td>07:00-14:00</td></tr>
                        <tr class="break"><td></td><td>City LC</td><td>Budaörs</td><td></td><td></td><td></td><td></td><td></td><td>14:09 Hét</td><td></td><td></td><td></td></tr>
                    </tbody>
                    <tfoot>
                        <tr class="rule"><td colspan="12"></td></tr>
                        <tr><td>9 Rende...</td><td></td><td></td><td></td><td></td><td>3,462</td><td>118</td><td></td><td></td><td>6:02</td><td></td><td></td></tr>
                    </tfoot>
                </table>
                <div class="scroll vertical">
                    <button class="arrow" aria-label="Fel"><svg viewBox="0 0 8 8"><path d="M4 2l4 4H0z"/></svg></button>
                    <span class="track grow"></span>
                    <span class="thumb"></span>
                    <button class="arrow" aria-label="Le"><svg viewBox="0 0 8 8"><path d="M0 2h8L4 6z"/></svg></button>
                </div>
                <div class="bottom">
                    <div class="tabs">
                        <button class="arrow" aria-label="Előző lap" disabled><svg viewBox="0 0 8 8"><path d="M6 0v8L2 4z"/></svg></button>
                        <button class="arrow" aria-label="Következő lap" disabled><svg viewBox="0 0 8 8"><path d="M2 0v8l4-4z"/></svg></button>
                        <button class="tab active"><svg viewBox="0 0 64 16"><path d="M0 0l8 14.500h48L63 0" fill="#fff" stroke="#000"/></svg><span>1. Járat</span></button>
                        <button class="tab"><svg viewBox="0 0 64 16"><path d="M0 0l8 14.500h48L63 0" fill="#c0c0c0" stroke="#000"/></svg><span>2. Járat</span></button>
                    </div>
                    <div class="scroll grow">
                        <button class="arrow" aria-label="Balra"><svg viewBox="0 0 8 8"><path d="M6 0v8L2 4z"/></svg></button>
                        <span class="thumb"></span>
                        <span class="track grow"></span>
                        <button class="arrow" aria-label="Jobbra"><svg viewBox="0 0 8 8"><path d="M2 0v8l4-4z"/></svg></button>
                    </div>
                </div>
            </div>
        </section>
    </main>

    <footer class="status">
        <span class="hint">Súgó: F1</span>
        <span class="cell">C:</span>
        <span class="cell s-name">DEMO</span>
        <span class="cell s-set">DD98</span>
        <span class="cell s-count">1017</span>
        <span class="cell s-trip">Járat:  40</span>
        <span class="cell s-turn">Ford.:   41</span>
        <span class="cell s-order">Rend.:  308</span>
    </footer>
</body>

</html>
```
FILE: styles.css
```
* {
    box-sizing: border-box;
}

body {
    margin: 0;
    height: 100vh;
    display: flex;
    flex-direction: column;
    overflow: hidden;
    background: #c0c0c0;
    color: #000;
    font-family: "Liberation Sans", Arial, sans-serif;
    font-size: 11px;
}

button {
    margin: 0;
    padding: 0;
    border: 0;
    border-radius: 0;
    background: #c0c0c0;
    color: inherit;
    font: inherit;
}

svg {
    display: block;
    shape-rendering: crispEdges;
}

.defs {
    position: absolute;
    width: 0;
    height: 0;
}

.dash {
    fill: none;
    stroke: #808080;
    stroke-dasharray: 2 1;
}

.grow {
    flex: 1;
}

/* title bars */
.titlebar {
    display: flex;
    align-items: center;
    height: 18px;
    flex: none;
    padding: 0 2px 0 4px;
    background: #000080;
    color: #fff;
}

.app-title {
    padding-right: 3px;
}

.titlebar.inactive {
    background: #808080;
    color: #c0c0c0;
}

.truck {
    width: 14px;
    height: 12px;
    margin-top: 4px;
}

.caption {
    flex: 1;
    margin: 0 0 0 3px;
    font-size: 12px;
    line-height: 18px;
    white-space: pre;
}

.winbuttons {
    display: flex;
}

.winbtn {
    width: 16px;
    height: 14px;
    padding: 2px;
    box-shadow: inset 1px 1px #fff, inset -1px -1px #000, inset -2px -2px #808080;
}

.winbtn svg {
    width: 12px;
    height: 10px;
}

.winbtn.close {
    margin-left: 2px;
}

/* menu */
.menu {
    display: flex;
    gap: 11px;
    height: 20px;
    flex: none;
    padding-left: 6px;
    line-height: 20px;
}

.menu a {
    color: #000;
    text-decoration: none;
}

/* toolbars */
.toolrow {
    display: flex;
    height: 25px;
    flex: none;
    padding-bottom: 1px;
}

.toolrow.first {
    height: 26px;
    border-top: 1px solid #808080;
    box-shadow: inset 0 1px #fff;
}

.tools {
    display: flex;
    margin-right: 1px;
    padding-right: 1px;
    border-right: 1px solid #808080;
    border-bottom: 1px solid #808080;
    box-shadow: 1px 1px #fff;
}

.tools::before {
    content: "";
    width: 5px;
    margin-right: 1px;
    border: solid #808080;
    border-width: 0 1px 0 0;
    box-shadow: inset 2px 0 #fff;
}

.tool {
    width: 23px;
    height: 23px;
    padding: 3px 2px 2px;
    background: none;
}

.tool svg {
    width: 18px;
    height: 18px;
}

.tool:disabled svg {
    filter: drop-shadow(1px 1px 0 #fff);
}

.sep {
    width: 2px;
    margin: 2px 1px 2px 2px;
    border-left: 1px solid #808080;
    border-right: 1px solid #fff;
}

/* workspace with floating windows */
.desktop {
    position: relative;
    flex: 1;
    overflow: hidden;
    border-top: 1px solid #000;
    background: #808080;
}

.window {
    position: absolute;
    display: flex;
    flex-direction: column;
    height: 334px;
    padding: 2px;
    border: 1px solid #000;
    border-top-color: #c0c0c0;
    border-left-color: #c0c0c0;
    background: #c0c0c0;
    box-shadow: inset 1px 1px #fff, inset -1px -1px #808080;
}

.map-window {
    top: 1px;
    left: 162px;
    right: -3px;
}

.trip-window {
    bottom: 0;
    left: 2px;
    right: 28px;
}

.frame {
    flex: 1;
    display: grid;
    grid-template-columns: minmax(0, 1fr) 16px;
    min-height: 0;
    margin: 2px 2px 2px 1px;
    border: 1px solid #000;
    border-right: 0;
    border-bottom: 0;
    box-shadow: -1px -1px #808080;
}

.map-frame {
    grid-template-rows: minmax(0, 1fr) 15px;
}

.trip-frame {
    grid-template-rows: minmax(0, 1fr) 17px;
}

/* map */
.map {
    width: 100%;
    height: 100%;
    fill: #000;
}

.yellow, .olive, .maroon, .red, .blue, .green, .cyan, .lime, .black {
    fill: none;
    stroke-width: 3px;
}

.yellow { stroke: #ff0; }
.olive { stroke: #808000; }
.maroon { stroke: #800000; }
.red { stroke: #f00; }
.blue { stroke: #00f; }
.green { stroke: #008000; }
.cyan { stroke: #0ff; }
.lime { stroke: #0f0; }
.black { stroke: #000; stroke-width: 6px; }

.places {
    font-size: 36px;
    font-weight: bold;
}

.streets {
    font-size: 30px;
}

.town {
    fill: #f00;
    stroke: #000;
    stroke-width: 3px;
}

.route {
    fill: none;
    stroke: #000;
    stroke-linecap: round;
}

.flag {
    fill: none;
    stroke: #fff;
    stroke-width: 3px;
}

/* scroll bars */
.scroll {
    display: flex;
    min-width: 0;
}

.vertical {
    flex-direction: column;
}

.track {
    background: repeating-conic-gradient(#fff 0 25%, #c0c0c0 0 50%) 0 0 / 2px 2px;
}

.arrow,
.thumb {
    width: 16px;
    height: 16px;
    flex: none;
    background: #c0c0c0;
    box-shadow: inset 1px 1px #fff, inset -1px -1px #000, inset -2px -2px #808080;
}

.arrow {
    padding: 4px;
}

.arrow svg {
    width: 8px;
    height: 8px;
}

.arrow:disabled svg {
    fill: #808080;
}

.map-above {
    height: 105px;
}

.map-thumb {
    height: 10px;
}

.grip {
    width: 16px;
    height: 15px;
}

/* trip table */
.trip {
    width: 100%;
    table-layout: fixed;
    border-collapse: separate;
    border-spacing: 0;
    font-size: 13px;
    line-height: 16px;
    white-space: nowrap;
}

.c-id { width: 65px; }
.c-name { width: 74px; }
.c-addr { width: 76px; }
.c-num { width: 42px; }
.c-weight { width: 49px; }
.c-volume { width: 52px; }
.c-code { width: 29px; }
.c-arrive { width: 80px; }
.c-spent { width: 79px; }
.c-leave { width: 73px; }

.trip th {
    height: 39px;
    padding: 0;
    border-right: 1px solid #808080;
    border-bottom: 1px solid #808080;
    font-weight: normal;
}

.trip th.last {
    padding-right: 2px;
    text-align: right;
}

.trip td {
    height: 19px;
    padding: 0 2px 0 1px;
    border-right: 1px solid #808080;
    border-bottom: 1px solid #808080;
    text-align: right;
    overflow: hidden;
}

.trip tbody {
    background: #fff;
}

.trip td:nth-child(-n+3),
.trip td:last-child {
    text-align: left;
}

.trip td:nth-child(5) {
    text-align: center;
}

.trip td:nth-child(2),
.trip th:nth-child(2) {
    border-right-width: 2px;
}

.trip th:last-child,
.trip td:last-child {
    border-right: 0;
}

.trip .break td {
    border-bottom-width: 2px;
}

.trip .selected td {
    background: #000;
    color: #fff;
}

.trip tfoot td {
    border-bottom: 0;
}

.trip tfoot .rule td {
    height: 3px;
    padding: 0;
    border-bottom: 1px solid #000;
    background: #fff;
}

/* sheet tabs */
.bottom {
    display: flex;
    min-width: 0;
}

.tabs {
    display: flex;
    width: 197px;
    border-top: 1px solid #000;
    border-right: 2px solid #000;
}

.tab {
    position: relative;
    width: 64px;
    height: 16px;
    background: none;
    line-height: 14px;
    font-size: 12px;
}

.tab svg {
    position: absolute;
    inset: 0;
    width: 64px;
    height: 16px;
}

.tab span {
    position: relative;
}

.tab.active {
    z-index: 1;
    font-weight: bold;
}

/* status bar */
.status {
    display: flex;
    align-items: center;
    gap: 3px;
    height: 18px;
    flex: none;
    padding: 1px 0 0 3px;
}

.hint {
    flex: 1;
}

.cell {
    width: 17px;
    height: 15px;
    padding-left: 2px;
    border: 1px solid #fff;
    border-top-color: #808080;
    border-left-color: #808080;
    line-height: 14px;
    white-space: pre;
}

.s-name { width: 46px; }
.s-set { width: 41px; }
.s-count { width: 38px; }
.s-trip { width: 65px; }
.s-turn { width: 70px; }
.s-order { width: 80px; }
```
